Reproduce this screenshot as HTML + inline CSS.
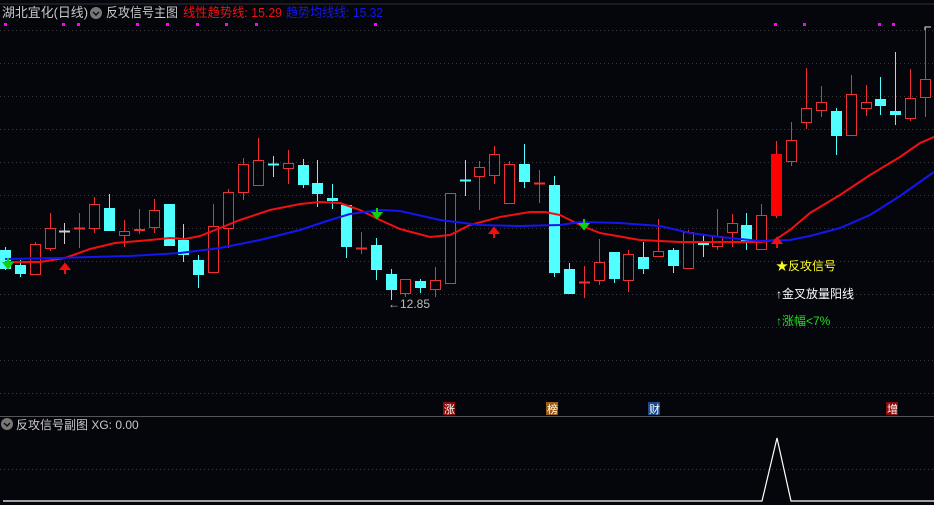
<!DOCTYPE html>
<html><head><meta charset="utf-8"><style>
html,body{margin:0;padding:0;background:#05060c;width:934px;height:505px;overflow:hidden}
svg{display:block}
text{font-family:"Liberation Sans","Noto Sans CJK SC",sans-serif}
</style></head><body>
<svg id="s" width="934" height="505" xmlns="http://www.w3.org/2000/svg">
<rect width="934" height="505" fill="#05060c"/>
<line x1="0" y1="416.5" x2="934" y2="416.5" stroke="#555" stroke-width="1"/>
<line x1="0" y1="4" x2="934" y2="4" stroke="#333" stroke-width="1"/>
<g id="grid" stroke="#3a3a3a" stroke-dasharray="1,3"></g>
<g id="c"></g>
<polyline fill="none" stroke="#f01010" stroke-width="2" points="5,262 40,262 65,258 90,249 115,243 150,240 170,238 185,239 200,236 220,228 240,220 270,210 300,204 320,202 340,203 360,210 380,220 400,229 430,237 450,235 470,225 500,217 530,212 545,212 560,215 580,225 600,233 640,240 680,242 720,242 760,242 775,240 790,230 810,213 840,195 870,175 900,157 920,143 934,137"/>
<polyline fill="none" stroke="#1515f0" stroke-width="2" points="5,259 60,258 90,257 130,256 180,253 220,248 260,240 300,230 330,220 350,214 380,210 400,211 440,220 480,225 520,226 560,225 580,222 620,223 660,226 690,233 720,237 760,241 790,240 810,236 840,228 870,215 900,196 934,172"/>
<g id="ar"></g>
<g fill="#f0f" id="dots"></g>
<text x="2" y="17" fill="#c8c8c8" font-size="13" textLength="86" lengthAdjust="spacingAndGlyphs">湖北宜化(日线)</text>
<circle cx="96" cy="13" r="6" fill="#777"/><path d="M93 12l3 3 3-3" stroke="#111" stroke-width="1.5" fill="none"/>
<text x="106" y="17" fill="#c8c8c8" font-size="13" textLength="72" lengthAdjust="spacingAndGlyphs">反攻信号主图</text>
<text x="183" y="17" fill="#f01010" font-size="13" textLength="99" lengthAdjust="spacingAndGlyphs">线性趋势线: 15.29</text>
<text x="286" y="17" fill="#1515f0" font-size="13" textLength="97" lengthAdjust="spacingAndGlyphs">趋势均线线: 15.32</text>
<text x="388" y="308" fill="#bbb" font-size="12">←12.85</text>
<text x="776" y="270" fill="#ffff20" font-size="12">★反攻信号</text>
<text x="776" y="298" fill="#ffffff" font-size="12">↑金叉放量阳线</text>
<text x="776" y="325" fill="#20e020" font-size="12">↑涨幅&lt;7%</text>
<path d="M925 30 l0 -3 l6 0" stroke="#ddd" fill="none"/>
<rect x="443" y="402" width="12" height="13" fill="#8a0a0a"/><text x="444" y="413" fill="#fff" font-size="11">涨</text>
<rect x="546" y="402" width="12" height="13" fill="#9a5a10"/><text x="547" y="413" fill="#fff" font-size="11">榜</text>
<rect x="648" y="402" width="12" height="13" fill="#1a4a8a"/><text x="649" y="413" fill="#fff" font-size="11">财</text>
<rect x="886" y="402" width="12" height="13" fill="#8a0a0a"/><text x="887" y="413" fill="#fff" font-size="11">增</text>
<circle cx="7" cy="424" r="6" fill="#777"/><path d="M4 423l3 3 3-3" stroke="#111" stroke-width="1.5" fill="none"/>
<text x="16" y="429" fill="#c8c8c8" font-size="12">反攻信号副图  XG: 0.00</text>
<line x1="0" y1="469.5" x2="934" y2="469.5" stroke="#3a3a3a" stroke-dasharray="1,3"/>
<polyline fill="none" stroke="#fff" stroke-width="1.2" points="3,501 762,501 777,438 791,501 934,501"/>
</svg>
<script>
var NS="http://www.w3.org/2000/svg";
function el(p,t,a){var e=document.createElementNS(NS,t);for(var k in a)e.setAttribute(k,a[k]);document.getElementById(p).appendChild(e);return e;}
for(var y=30;y<=393;y+=33)el("grid","line",{x1:0,y1:y+.5,x2:934,y2:y+.5});
var C=[[5,'c',250,269,247,270],[20,'c',265,274,260,277],[35,'r',244,275,242,275],[50,'r',228,249,213,251],[64,'w',231,231,223,244],[79,'r',228,228,213,248],[94,'r',204,229,197,233],[109,'c',208,231,194,231],[124,'r',231,236,220,247],[139,'r',229,231,209,234],[154,'r',210,228,199,233],[169,'c',204,246,204,246],[183,'c',240,255,224,262],[198,'c',260,275,255,288],[213,'r',226,273,204,273],[228,'r',192,229,189,248],[243,'r',164,193,158,200],[258,'r',160,186,138,186],[273,'c',164,164,156,177],[288,'r',163,169,150,184],[303,'c',165,185,159,188],[317,'c',183,194,160,207],[332,'c',198,201,184,209],[346,'c',205,247,205,258],[361,'r',248,248,232,254],[376,'c',245,270,238,280],[391,'c',274,290,269,300],[405,'r',279,294,279,297],[420,'c',281,288,279,293],[435,'r',280,290,267,297],[450,'r',193,284,193,284],[465,'c',180,180,160,196],[479,'r',167,177,161,210],[494,'r',154,176,146,184],[509,'r',164,204,161,204],[524,'c',164,182,144,188],[539,'r',183,183,170,203],[554,'c',185,273,176,277],[569,'c',269,294,263,294],[584,'r',282,282,266,298],[599,'r',262,281,239,285],[614,'c',252,279,252,283],[628,'r',254,281,250,292],[643,'c',257,269,242,274],[658,'r',251,257,219,257],[673,'c',250,266,248,273],[688,'r',232,269,230,269],[703,'c',241,245,234,257],[717,'r',236,247,209,250],[732,'r',223,233,214,247],[746,'c',225,242,213,250],[761,'r',215,250,204,250],[776,'R',154,216,141,218],[791,'r',140,162,122,166],[806,'r',108,123,68,129],[821,'r',102,111,86,117],[836,'c',111,136,108,155],[851,'r',94,136,75,136],[866,'r',102,109,85,116],[880,'c',99,106,77,115],[895,'c',111,115,52,125],[910,'r',98,119,69,121],[925,'r',79,98,28,117]];
C.forEach(function(d){var x=d[0],t=d[1],col=t=='c'?'#50ffff':t=='w'?'#ccc':'#f03030';
el("c","line",{x1:x+.5,y1:d[4],x2:x+.5,y2:d[5],stroke:col});
var h=d[3]-d[2];
if(h<2){el("c","line",{x1:x-5,y1:d[2]+.5,x2:x+6,y2:d[2]+.5,stroke:col,"stroke-width":2});}
else if(t=='c'||t=='R'){el("c","rect",{x:x-5,y:d[2],width:11,height:h,fill:t=='R'?'#ff0000':col});}
else el("c","rect",{x:x-4.5,y:d[2]+.5,width:10,height:h-1,fill:"#05060c",stroke:col});
});
function dn(x,y){el("ar","path",{d:"M"+x+" "+y+"v7M"+(x-4)+" "+(y+5)+"l4 5 4-5z",stroke:"#10d010",fill:"#10d010","stroke-width":2});}
function up(x,y){el("ar","path",{d:"M"+x+" "+(y+10)+"v-7M"+(x-4)+" "+(y+5)+"l4-5 4 5z",stroke:"#f01010",fill:"#f01010","stroke-width":2});}
dn(8,258);up(65,264);dn(377,208);up(494,228);dn(584,219);up(777,238);
[5,63,78,137,167,197,226,256,375,775,804,879,893].forEach(function(x){el("dots","rect",{x:x-1,y:23,width:3,height:3});});
</script>
</body></html>
